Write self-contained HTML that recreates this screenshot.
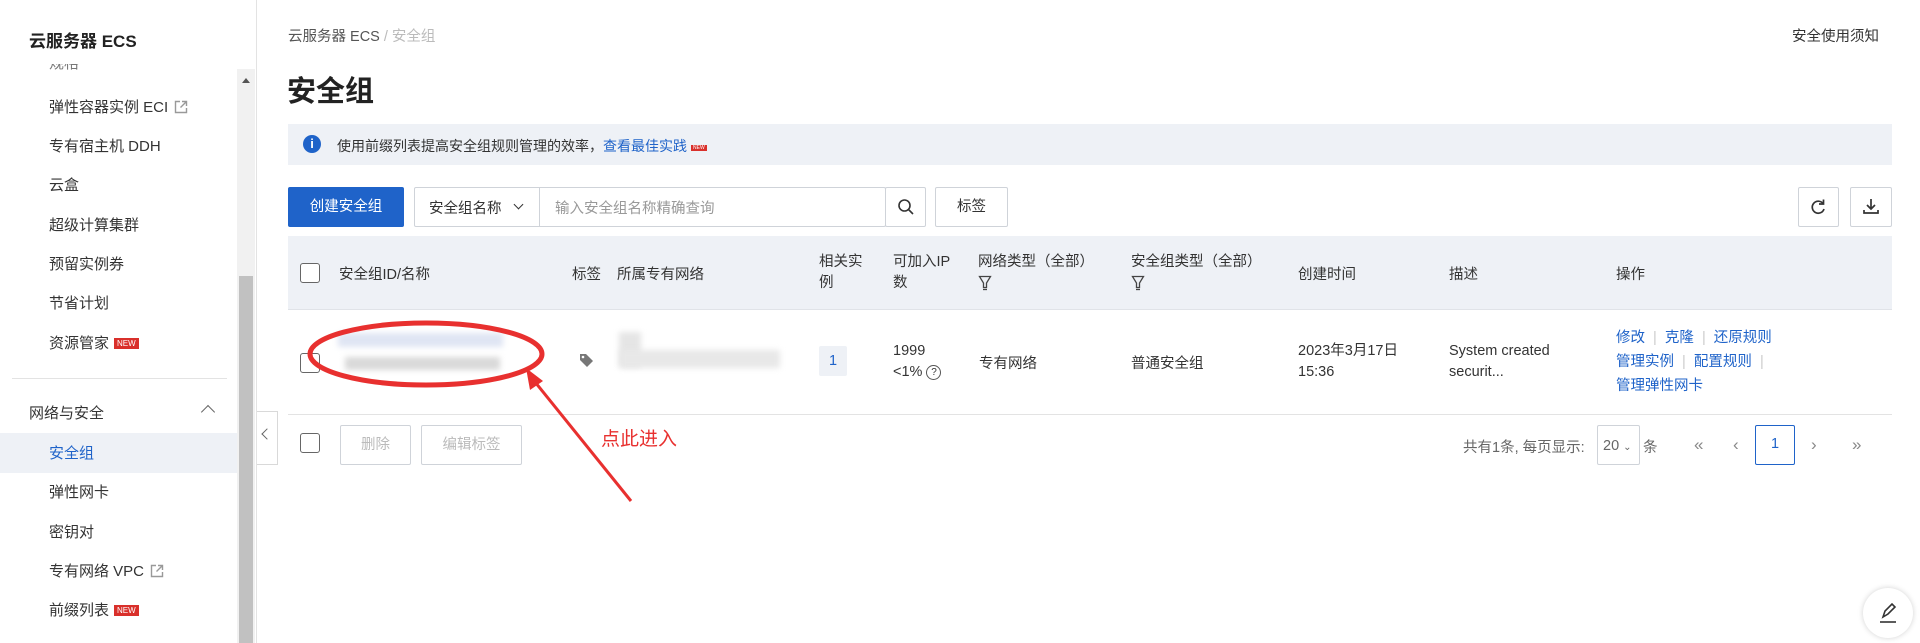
<!DOCTYPE html>
<html><head><meta charset="utf-8"><style>
*{box-sizing:border-box;margin:0;padding:0}
body{width:1920px;height:643px;overflow:hidden;background:#fff;font-family:"Liberation Sans","Noto Sans CJK SC",sans-serif;color:#333;font-size:14.5px;position:relative}
.a{position:absolute;white-space:nowrap}
.side{position:absolute;left:0;top:0;width:257px;height:643px;border-right:1px solid #e3e3e3}
.si{position:absolute;left:49px;font-size:15px;color:#333}
.new{display:inline-block;background:#d9302b;color:#fff;font-size:8px;padding:1px 3px;margin-left:5px;vertical-align:2px}
.btn{position:absolute;border:1px solid #cfd3d9;background:#fff;border-radius:2px}
.blue{color:#1f63c9}
.chk{position:absolute;width:20px;height:20px;border:1.5px solid #666;border-radius:3px;background:#fff}
.ext{display:inline-block;margin-left:6px;vertical-align:-2px}
.fun{display:block;margin-top:2px}
</style></head><body>
<div class="side">
 <div class="a" style="left:29px;top:27px;font-size:17px;font-weight:bold;color:#222">云服务器 ECS</div>
 <div class="si" style="top:64px;height:7px;overflow:hidden;color:#777"><div style="margin-top:-12px">规格</div></div>
 <div class="si" style="top:96px">弹性容器实例 ECI<svg class="ext" width="14" height="14" viewBox="0 0 14 14"><path d="M6 1.5H1.5v11h11V8" fill="none" stroke="#999" stroke-width="1.4"/><path d="M8 1.5h4.5V6M12.5 1.5L6.5 7.5" fill="none" stroke="#999" stroke-width="1.4"/></svg></div>
 <div class="si" style="top:135px">专有宿主机 DDH</div>
 <div class="si" style="top:174px">云盒</div>
 <div class="si" style="top:214px">超级计算集群</div>
 <div class="si" style="top:253px">预留实例券</div>
 <div class="si" style="top:292px">节省计划</div>
 <div class="si" style="top:332px">资源管家<span class="new">NEW</span></div>
 <div style="position:absolute;left:12px;top:378px;width:215px;height:1px;background:#e3e3e3"></div>
 <div class="si" style="left:29px;top:402px">网络与安全</div>
 <div class="a" style="left:203px;top:407px;width:10px;height:10px;border-left:1.5px solid #666;border-top:1.5px solid #666;transform:rotate(45deg)"></div>
 <div style="position:absolute;left:0;top:433px;width:237px;height:40px;background:#eef1f6"></div>
 <div class="si blue" style="top:442px">安全组</div>
 <div class="si" style="top:481px">弹性网卡</div>
 <div class="si" style="top:521px">密钥对</div>
 <div class="si" style="top:560px">专有网络 VPC<svg class="ext" width="14" height="14" viewBox="0 0 14 14"><path d="M6 1.5H1.5v11h11V8" fill="none" stroke="#999" stroke-width="1.4"/><path d="M8 1.5h4.5V6M12.5 1.5L6.5 7.5" fill="none" stroke="#999" stroke-width="1.4"/></svg></div>
 <div class="si" style="top:599px">前缀列表<span class="new">NEW</span></div>
 <div style="position:absolute;left:237px;top:69px;width:18px;height:574px;background:#f1f1f1"></div>
 <div style="position:absolute;left:239px;top:276px;width:14px;height:367px;background:#c1c1c1"></div>
 <div class="a" style="left:242px;top:78px;width:0;height:0;border-left:4px solid transparent;border-right:4px solid transparent;border-bottom:5px solid #555"></div>
</div>
<div style="position:absolute;left:257px;top:411px;width:21px;height:54px;border:1px solid #d9d9d9;border-left:none;background:#fff"></div>
<div class="a" style="left:263px;top:430px;width:8px;height:8px;border-left:1.5px solid #666;border-bottom:1.5px solid #666;transform:rotate(45deg)"></div>

<div class="a" style="left:288px;top:25px;font-size:14.5px;color:#555">云服务器 ECS <span style="color:#bbb">/ 安全组</span></div>
<div class="a" style="left:1792px;top:25px;font-size:14.5px;color:#333">安全使用须知</div>
<div class="a" style="left:287px;top:68px;font-size:29px;font-weight:bold;color:#222">安全组</div>

<div style="position:absolute;left:288px;top:124px;width:1604px;height:41px;background:#eef1f6"></div>
<div class="a" style="left:303px;top:135px;width:18px;height:18px;border-radius:50%;background:#1f63c9;color:#fff;font-size:13px;font-weight:bold;text-align:center;line-height:18px">i</div>
<div class="a" style="left:337px;top:136px;font-size:14px;color:#333">使用前缀列表提高安全组规则管理的效率，<span class="blue">查看最佳实践</span><span class="new" style="font-size:5px;padding:0 2px;margin-left:4px">NEW</span></div>

<div class="a" style="left:288px;top:187px;width:116px;height:40px;background:#1f63c9;border-radius:2px;color:#fff;font-size:14.5px;text-align:center;line-height:40px">创建安全组</div>
<div class="btn" style="left:414px;top:187px;width:472px;height:40px"></div>
<div class="a" style="left:539px;top:188px;width:1px;height:38px;background:#cfd3d9"></div>
<div class="btn" style="left:885px;top:187px;width:41px;height:40px"></div>
<div class="a" style="left:429px;top:197px;font-size:14.5px">安全组名称</div>
<div class="a" style="left:515px;top:201px;width:7px;height:7px;border-right:1.5px solid #333;border-bottom:1.5px solid #333;transform:rotate(45deg)"></div>
<div class="a" style="left:555px;top:197px;font-size:14.5px;color:#999">输入安全组名称精确查询</div>
<svg class="a" style="left:897px;top:198px" width="18" height="18" viewBox="0 0 18 18"><circle cx="7.5" cy="7.5" r="5.5" fill="none" stroke="#333" stroke-width="1.6"/><path d="M11.5 11.5L16 16" stroke="#333" stroke-width="1.6"/></svg>
<div class="btn" style="left:935px;top:187px;width:73px;height:40px;text-align:center;line-height:38px">标签</div>
<div class="btn" style="left:1798px;top:187px;width:41px;height:40px"></div>
<svg class="a" style="left:1809px;top:198px" width="18" height="18" viewBox="0 0 18 18"><path d="M14 5.5A6 6 0 1 0 15 11" fill="none" stroke="#333" stroke-width="1.7"/><path d="M14.5 1.5v4.5h-4.5" fill="none" stroke="#333" stroke-width="1.7"/></svg>
<div class="btn" style="left:1850px;top:187px;width:42px;height:40px"></div>
<svg class="a" style="left:1862px;top:197px" width="18" height="18" viewBox="0 0 18 18"><path d="M9 2v10M5 8l4 4 4-4M2 13v3h14v-3" fill="none" stroke="#333" stroke-width="1.7"/></svg>

<div style="position:absolute;left:288px;top:236px;width:1604px;height:74px;background:#eef1f6;border-bottom:1px solid #e0e3e8"></div>
<div class="chk" style="left:300px;top:263px"></div>
<div class="a" style="left:339px;top:263px">安全组ID/名称</div>
<div class="a" style="left:572px;top:263px">标签</div>
<div class="a" style="left:617px;top:263px">所属专有网络</div>
<div class="a" style="left:819px;top:252px;line-height:21px">相关实<br>例</div>
<div class="a" style="left:893px;top:252px;line-height:21px">可加入IP<br>数</div>
<div class="a" style="left:978px;top:252px;line-height:21px">网络类型（全部）<svg class="fun" width="14" height="16" viewBox="0 0 14 16"><path d="M1.5 1.5h11L8.5 8v4.5h-3V8z" fill="none" stroke="#444" stroke-width="1.3"/><path d="M5 14.5h4" stroke="#444" stroke-width="1.3"/></svg></div>
<div class="a" style="left:1131px;top:252px;line-height:21px">安全组类型（全部）<svg class="fun" width="14" height="16" viewBox="0 0 14 16"><path d="M1.5 1.5h11L8.5 8v4.5h-3V8z" fill="none" stroke="#444" stroke-width="1.3"/><path d="M5 14.5h4" stroke="#444" stroke-width="1.3"/></svg></div>
<div class="a" style="left:1298px;top:263px">创建时间</div>
<div class="a" style="left:1449px;top:263px">描述</div>
<div class="a" style="left:1616px;top:263px">操作</div>

<div style="position:absolute;left:288px;top:414px;width:1604px;height:1px;background:#e3e3e3"></div>
<div class="chk" style="left:300px;top:353px"></div>
<div class="a" style="left:338px;top:333px;width:165px;height:14px;background:#dfe5f3;filter:blur(3px)"></div>
<div class="a" style="left:345px;top:357px;width:155px;height:13px;background:#d9d9d9;filter:blur(3px)"></div>
<div class="a" style="left:619px;top:332px;width:22px;height:35px;background:#e5e5e5;filter:blur(3px)"></div>
<div class="a" style="left:620px;top:350px;width:160px;height:18px;background:#e8e8e8;filter:blur(3px)"></div>
<svg class="a" style="left:579px;top:353px" width="15" height="15" viewBox="0 0 15 15"><path d="M1 1h6l7 7-6 6-7-7z" fill="#777"/><circle cx="4" cy="4" r="1.3" fill="#fff"/></svg>
<div class="a" style="left:819px;top:346px;width:28px;height:30px;background:#eef1f6;border-radius:2px;text-align:center;line-height:30px;color:#1f63c9">1</div>
<div class="a" style="left:893px;top:341px;line-height:21px">1999<br>&lt;1% <span style="display:inline-block;width:15px;height:15px;border:1.3px solid #555;border-radius:50%;font-size:10px;text-align:center;line-height:13px;vertical-align:1px">?</span></div>
<div class="a" style="left:979px;top:352px">专有网络</div>
<div class="a" style="left:1131px;top:352px">普通安全组</div>
<div class="a" style="left:1298px;top:341px;line-height:21px">2023年3月17日<br>15:36</div>
<div class="a" style="left:1449px;top:341px;line-height:21px">System created<br>securit...</div>
<div class="a blue" style="left:1616px;top:326px;line-height:24px">修改 <span style="color:#ccc">&nbsp;|&nbsp;</span> 克隆 <span style="color:#ccc">&nbsp;|&nbsp;</span> 还原规则<br>管理实例 <span style="color:#ccc">&nbsp;|&nbsp;</span> 配置规则 <span style="color:#ccc">&nbsp;|</span><br>管理弹性网卡</div>

<svg class="a" style="left:300px;top:305px" width="360" height="210" viewBox="0 0 360 210"><ellipse cx="126" cy="49" rx="116" ry="31" fill="none" stroke="#e8302f" stroke-width="5"/><path d="M331 196L231 72" stroke="#e8302f" stroke-width="3"/><path d="M226 63l4 22 13-9z" fill="#e8302f"/></svg>
<div class="a" style="left:601px;top:424px;font-size:19px;color:#e8302f">点此进入</div>

<div class="chk" style="left:300px;top:433px"></div>
<div class="btn" style="left:340px;top:425px;width:71px;height:40px;text-align:center;line-height:38px;color:#bbb">删除</div>
<div class="btn" style="left:421px;top:425px;width:101px;height:40px;text-align:center;line-height:38px;color:#bbb">编辑标签</div>
<div class="a" style="left:1463px;top:436px;color:#666">共有1条, 每页显示:</div>
<div class="btn" style="left:1597px;top:425px;width:43px;height:40px;color:#666;padding:12px 0 0 5px">20 <span style="font-size:10px">⌄</span></div>
<div class="a" style="left:1643px;top:436px;color:#666">条</div>
<div class="a" style="left:1694px;top:435px;color:#888;font-size:17px">«</div>
<div class="a" style="left:1733px;top:435px;color:#888;font-size:17px">‹</div>
<div class="a" style="left:1755px;top:425px;width:40px;height:40px;border:1.5px solid #1f63c9;border-radius:2px;text-align:center;line-height:37px;color:#1f63c9">1</div>
<div class="a" style="left:1811px;top:435px;color:#888;font-size:17px">›</div>
<div class="a" style="left:1852px;top:435px;color:#888;font-size:17px">»</div>

<div class="a" style="left:1863px;top:588px;width:50px;height:50px;border-radius:50%;background:#fff;box-shadow:0 0 6px rgba(0,0,0,.18)"></div>
<svg class="a" style="left:1877px;top:601px" width="22" height="24" viewBox="0 0 22 24"><path d="M6 16l2-6 7-7 3 3-7 7z" fill="none" stroke="#333" stroke-width="1.6"/><path d="M3 21h16" stroke="#333" stroke-width="1.6"/></svg>
</body></html>
